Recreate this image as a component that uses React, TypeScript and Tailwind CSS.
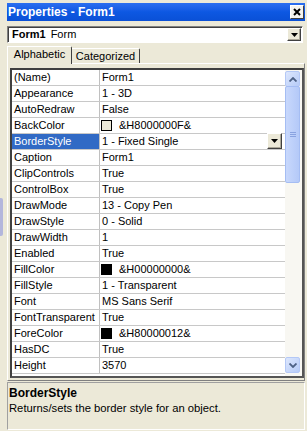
const rows: { name: string; value: string; swatch?: string }[] = [
  { name: "(Name)", value: "Form1" },
  { name: "Appearance", value: "1 - 3D" },
  { name: "AutoRedraw", value: "False" },
  { name: "BackColor", value: "&H8000000F&", swatch: "#ECE9D8" },
  { name: "BorderStyle", value: "1 - Fixed Single" },
  { name: "Caption", value: "Form1" },
  { name: "ClipControls", value: "True" },
  { name: "ControlBox", value: "True" },
  { name: "DrawMode", value: "13 - Copy Pen" },
  { name: "DrawStyle", value: "0 - Solid" },
  { name: "DrawWidth", value: "1" },
  { name: "Enabled", value: "True" },
  { name: "FillColor", value: "&H00000000&", swatch: "#000000" },
  { name: "FillStyle", value: "1 - Transparent" },
  { name: "Font", value: "MS Sans Serif" },
  { name: "FontTransparent", value: "True" },
  { name: "ForeColor", value: "&H80000012&", swatch: "#000000" },
  { name: "HasDC", value: "True" },
  { name: "Height", value: "3570" },
];

const selected = "BorderStyle";

// classic grey drop button with a small black triangle
const DropButton = ({ className }: { className: string }) => (
  <div
    className={`flex items-center justify-center bg-[#ECE9D8] border border-t-white border-l-white border-r-[#404040] border-b-[#404040] shadow-[inset_-1px_-1px_0_#aca899] ${className}`}
  >
    <svg width="7" height="4" viewBox="0 0 7 4">
      <polygon points="0,0 7,0 3.5,4" fill="#000" />
    </svg>
  </div>
);

const ScrollArrow = ({ up }: { up?: boolean }) => (
  <div className="h-[16px] rounded-[2px] border border-[#b4c8f6] bg-gradient-to-br from-[#dde7fd] to-[#b6cbf7] flex items-center justify-center">
    <svg width="8" height="5" viewBox="0 0 8 5">
      <polyline
        points={up ? "0.5,4.5 4,1 7.5,4.5" : "0.5,0.5 4,4 7.5,0.5"}
        fill="none"
        stroke="#4d6185"
        strokeWidth="1.8"
      />
    </svg>
  </div>
);

export default function App() {
  return (
    <div className="w-[307px] h-[431px] overflow-hidden bg-[#ECE9D8] flex font-['Liberation_Sans',Arial,sans-serif] text-[11px] text-black">
      {/* edge of the window behind */}
      <div className="w-[7px] shrink-0 flex flex-col">
        <div className="mt-[198px] h-[38px] w-[3px] rounded-r-[2px] bg-[#b3b6dc]" />
      </div>

      <div className="w-[298px] shrink-0 flex flex-col pt-[3px]">
        {/* title bar */}
        <div className="h-[18px] bg-gradient-to-b from-[#2b6ef0] via-[#0d58e2] to-[#0a50d6] flex items-center justify-between pl-[1px] pr-[1px]">
          <span className="text-white font-bold text-[12px] leading-none">Properties - Form1</span>
          <div className="w-[14px] h-[14px] bg-[#f4f3ee] border border-t-white border-l-white border-r-[#404040] border-b-[#404040] flex items-center justify-center">
            <svg width="8" height="8" viewBox="0 0 8 8">
              <path d="M1 1 L7 7 M7 1 L1 7" stroke="#000" strokeWidth="2" />
            </svg>
          </div>
        </div>

        {/* object combo */}
        <div className="mt-[5px] w-[296px] h-[17px] bg-white border border-t-[#808080] border-l-[#808080] border-r-white border-b-white shadow-[inset_1px_1px_0_#404040] flex items-center justify-between pl-[4px] pr-[1px]">
          <span className="leading-none">
            <span className="font-bold">Form1</span>
            <span className="ml-[5px]">Form</span>
          </span>
          <DropButton className="w-[14px] h-[13px]" />
        </div>

        {/* tabs */}
        <div className="mt-[3px] h-[17px] flex items-end">
          <div className="relative z-10 -mb-[1px] h-[18px] w-[65px] bg-[#ECE9D8] border-l border-t border-r border-l-white border-t-white border-r-[#404040] rounded-tr-[2px] flex items-center justify-center pb-[2px]">
            Alphabetic
          </div>
          <div className="h-[15px] w-[68px] bg-[#ECE9D8] border-t border-r border-t-white border-r-[#404040] rounded-tr-[2px] flex items-center justify-center">
            Categorized
          </div>
        </div>

        {/* tab page */}
        <div className="h-[318px] border border-t-white border-l-white border-r-[#808080] border-b-[#808080] pt-[4px] pl-[2px]">
          <div className="w-[294px] h-[310px] bg-white border-2 border-t-[#404040] border-l-[#404040] border-r-[#555] border-b-[#555] flex">
            {/* rows */}
            <div className="w-[273px] flex flex-col">
              {rows.map((r) => {
                const sel = r.name === selected;
                return (
                  <div key={r.name} className="h-[16px] shrink-0 flex border-b border-[#c8c8c8]">
                    <div
                      className={`w-[88px] shrink-0 border-r border-[#c0c0c0] pl-[2px] flex items-center leading-none ${
                        sel ? "bg-[#316AC5] text-white" : ""
                      }`}
                    >
                      {r.name}
                    </div>
                    <div className="flex-1 flex items-center pl-[1px] leading-none">
                      {r.swatch && (
                        <div
                          className="w-[11px] h-[11px] border border-black mr-[6px] shrink-0"
                          style={{ backgroundColor: r.swatch }}
                        />
                      )}
                      <span className="flex-1 pl-[1px]">{r.value}</span>
                      {sel && <DropButton className="w-[15px] h-[16px] mr-[3px] -mt-[1px]" />}
                    </div>
                  </div>
                );
              })}
            </div>

            {/* scrollbar */}
            <div className="w-[17px] bg-[#f8f7f2] flex flex-col py-[1px] pr-[2px]">
              <ScrollArrow up />
              <div className="h-[97px] -mt-[1px] rounded-[2px] border border-[#a5bdf3] bg-gradient-to-r from-[#c8d8fc] to-[#b4c9f8] flex flex-col items-center justify-center gap-[1px]">
                <div className="w-[6px] h-[1px] bg-[#8aa3e0]" />
                <div className="w-[6px] h-[1px] bg-[#8aa3e0]" />
                <div className="w-[6px] h-[1px] bg-[#8aa3e0]" />
              </div>
              <div className="flex-1" />
              <div className="mb-[2px]">
                <ScrollArrow />
              </div>
            </div>
          </div>
        </div>

        {/* description */}
        <div className="mt-[1px] h-[48px] border border-t-[#a0a0a0] border-l-[#a0a0a0] border-r-white border-b-white pl-[1px] pt-[3px]">
          <div className="font-bold text-[12px] leading-[14px]">BorderStyle</div>
          <div className="text-[11.25px] leading-[14px] mt-[1px]">Returns/sets the border style for an object.</div>
        </div>
      </div>
    </div>
  );
}
